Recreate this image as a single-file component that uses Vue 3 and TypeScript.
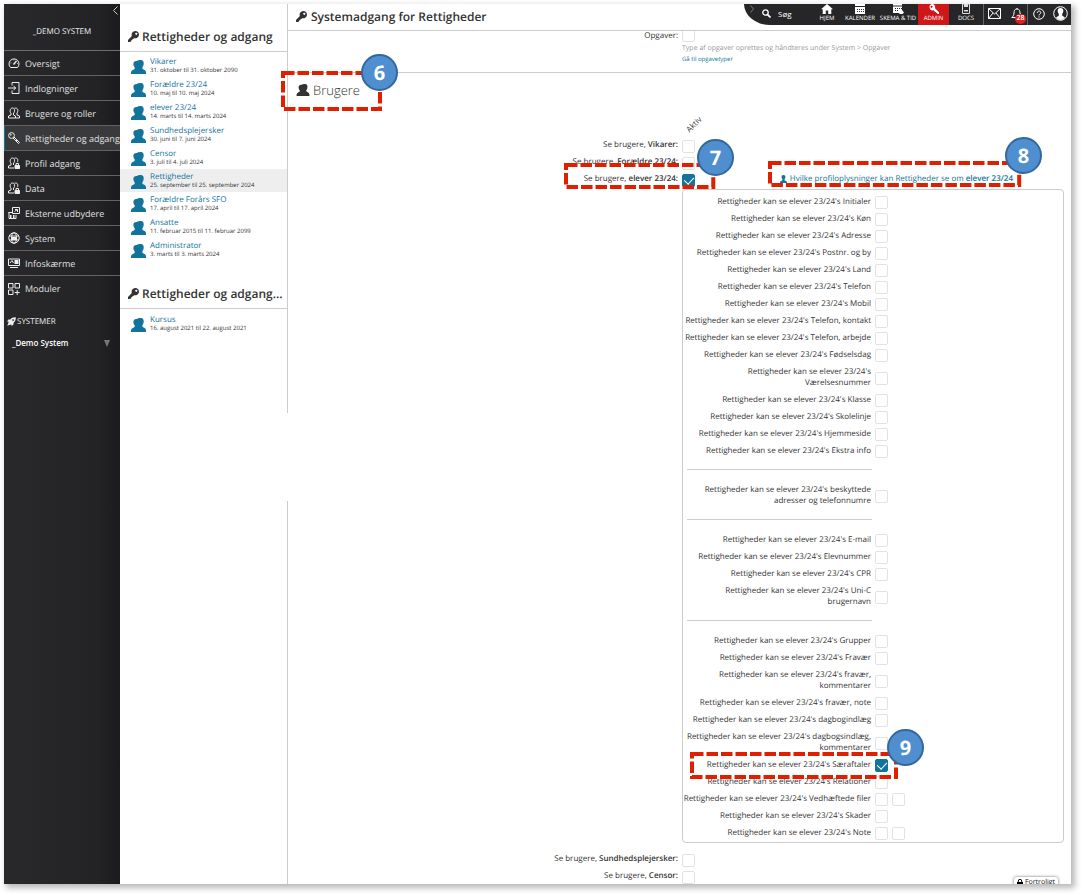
<script setup lang="ts">
import { ref } from 'vue'

interface NavItem { label: string; icon: string; active?: boolean }
interface RoleItem { name: string; period: string; selected?: boolean }
interface Permission { id: string; label: string; checked?: boolean; extra?: boolean; marked?: boolean }

const navItems: NavItem[] = [
  { label: 'Oversigt', icon: 'gauge' },
  { label: 'Indlogninger', icon: 'login' },
  { label: 'Brugere og roller', icon: 'users' },
  { label: 'Rettigheder og adgang', icon: 'key', active: true },
  { label: 'Profil adgang', icon: 'userlock' },
  { label: 'Data', icon: 'userlock' },
  { label: 'Eksterne udbydere', icon: 'external' },
  { label: 'System', icon: 'globe' },
  { label: 'Infoskærme', icon: 'screen' },
  { label: 'Moduler', icon: 'modules' },
]

const roles: RoleItem[] = [
  { name: 'Vikarer', period: '31. oktober til 31. oktober 2090' },
  { name: 'Forældre 23/24', period: '10. maj til 10. maj 2024' },
  { name: 'elever 23/24', period: '14. marts til 14. marts 2024' },
  { name: 'Sundhedsplejersker', period: '30. juni til 7. juni 2024' },
  { name: 'Censor', period: '3. juli til 4. juli 2024' },
  { name: 'Rettigheder', period: '25. september til 25. september 2024', selected: true },
  { name: 'Forældre Forårs SFO', period: '17. april til 17. april 2024' },
  { name: 'Ansatte', period: '11. februar 2015 til 11. februar 2099' },
  { name: 'Administrator', period: '3. marts til 3. marts 2024' },
]
const expiredRoles: RoleItem[] = [
  { name: 'Kursus', period: '16. august 2021 til 22. august 2021' },
]

const prefix = "Rettigheder kan se elever 23/24's"
// A leading newline puts a long permission name on its own line.
const make = (entries: string[]): Permission[] =>
  entries.map((label) => ({ id: 'p-' + label.toLowerCase().replace(/[^a-zæøå]+/g, '-'), label }))

const groups = ref<Permission[][]>([
  make([' Initialer', ' Køn', ' Adresse', ' Postnr. og by', ' Land', ' Telefon', ' Mobil', ' Telefon, kontakt',
    ' Telefon, arbejde', ' Fødselsdag', '\nVærelsesnummer', ' Klasse', ' Skolelinje', ' Hjemmeside', ' Ekstra info']),
  make([' beskyttede\nadresser og telefonnumre']),
  make([' E-mail', ' Elevnummer', ' CPR', ' Uni-C\nbrugernavn']),
  make([' Grupper', ' Fravær', ' fravær,\nkommentarer', ' fravær, note', ' dagbogindlæg',
    ' dagbogsindlæg,\nkommentarer', ' Særaftaler', ' Relationer', ' Vedhæftede filer', ' Skader', ' Note']).map((p) => ({
    ...p,
    checked: p.label === ' Særaftaler',
    marked: p.label === ' Særaftaler',
    extra: p.label === ' Vedhæftede filer' || p.label === ' Note',
  })),
])

const opgaver = ref(false)
const seeVikarer = ref(false)
const seeForaeldre = ref(false)
const seeElever = ref(true)
const seeSundhed = ref(false)
const seeCensor = ref(false)
const system = ref('_Demo System')
const query = ref('')
</script>

<template>
  <div class="frame">
    <svg class="defs" aria-hidden="true">
      <symbol id="people" viewBox="0 0 15 14">
        <path d="M9 0c2.700-.2 3.900 1.300 3.700 3.800-.1 1.500-.6 2.600-1.300 3.400v1.300c.4 1 3.200 1.200 3.600 3.500v2H0v-1.800c.4-2.300 3-2.500 3.700-3.500V7.500C2.900 6.700 2.500 5.800 2.400 4.600 2.200 2.300 3.400.8 5.800 1 6.600.3 7.700 0 9 0z" />
      </symbol>
      <symbol id="person" viewBox="0 0 12 14">
        <path d="M6 0c2.600 0 3.600 1.600 3.400 3.800-.1 1.400-.7 2.400-1.500 3.200v2c.4 1 3.600 1 4.100 3.200V14H0v-1.800c.5-2.200 3.700-2.200 4.100-3.200V7C3.300 6.200 2.700 5.200 2.600 3.800 2.400 1.600 3.400 0 6 0z" />
      </symbol>
      <symbol id="solidkey" viewBox="0 0 12 12">
        <path fill-rule="evenodd" d="M8 0a4 4 0 1 1-1.300 7.800l-1 .9-.9.200-.2 1-1 .3-.2 1L2.300 12H0V9.900l4.200-4.500A4 4 0 0 1 8 0zm1 2a1.100 1.100 0 1 0 .1 0z" />
      </symbol>
    </svg>

    <aside class="sidebar">
      <div class="brand">
        <button class="collapse" type="button" aria-label="Skjul menu">
          <svg width="5" height="9" viewBox="0 0 5 9"><path d="M4.500.5l-4 4 4 4" fill="none" stroke="#ccc" /></svg>
        </button>
        _DEMO SYSTEM
      </div>
      <nav>
        <a v-for="item in navItems" :key="item.label" href="#" class="nav-item" :class="{ active: item.active }">
          <svg class="nav-icon" viewBox="0 0 12 12" fill="none" stroke="#eee">
            <template v-if="item.icon === 'gauge'">
              <path d="M2.500 10.500a5 5 0 1 1 7 0z" /><path d="M5.500 7.500L8.500 4" stroke-width="1.400" /><path d="M2.500 6h1M6 2.500v1M9 6.500h1" stroke-width=".7" />
            </template>
            <template v-else-if="item.icon === 'login'">
              <path d="M4 3.500V.5h7v11H4v-3" /><path d="M0 6h7.500M5.500 3.800L7.700 6 5.500 8.200" />
            </template>
            <template v-else-if="item.icon === 'users'">
              <path d="M4.500 1c2.600 0 2.600 4 1 5v2l2 1v2H.5V9l2.500-1V6C1.400 5 1.900 1 4.500 1z" /><path d="M6.500 1.200c4-.9 3.800 3.300 2.500 4.800v2l2.500 1v2H7.500" />
            </template>
            <template v-else-if="item.icon === 'key'">
              <circle cx="3.500" cy="3.500" r="2.900" /><path d="M5 6l5.500 5.500 1-1L6 5M8 9l1-1" /><circle cx="2.800" cy="2.800" r=".5" />
            </template>
            <template v-else-if="item.icon === 'userlock'">
              <path d="M4.500 1c2.600 0 2.600 4 1 5v2M.5 11V9L3 8V6C1.400 5 1.900 1 4.500 1M.5 11H6" /><path d="M6.500 1.200c3.600-.9 3.800 2.300 2.800 4" />
              <path d="M7 8.500h4.500v3H7z" fill="#eee" /><path d="M8 8.500V6.500h2.500v2" />
            </template>
            <template v-else-if="item.icon === 'external'">
              <path d="M4.500.5h7v6h-7z" /><path d="M1 5v6.500h7V8M.5 5.500h4M6.500 4.500l3-2M7 2.500h2.500V5" /><path d="M2 8h1.500v3H2zM5 8h1.500v3H5z" fill="#eee" stroke="none" />
            </template>
            <template v-else-if="item.icon === 'globe'">
              <circle cx="6" cy="6" r="5.200" /><ellipse cx="6" cy="6" rx="2.400" ry="5.200" /><path d="M1 4h10M1 8h10" /><path d="M3 5h6v3H3z" fill="#eee" stroke="none" />
            </template>
            <template v-else-if="item.icon === 'screen'">
              <path d="M.5 2h11v6.500H.5z" /><path d="M2 10.500h8M2 6l2-2.500L5.500 6" /><path d="M6.500 3h4v4h-4z" fill="#eee" stroke="none" />
            </template>
            <template v-else>
              <path d="M.5.500h4.500v4.500H.5zM7 .5h4.500v4.500H7zM.5 7h4.500v4.500H.5zM9.200 7v5M6.700 9.500h5" />
            </template>
          </svg>
          <span>{{ item.label }}</span>
        </a>
      </nav>
      <h2 class="systems-title">
        <svg width="9" height="9" viewBox="0 0 9 9" fill="#eee"><path fill-rule="evenodd" d="M8.800.2C6 .1 4.500 1 3.200 2.400L1.400 2.500.1 4.400l1.600.3-.5 1.500L.3 8.700l2.600-.9 1.400-.4.3 1.500 1.900-1.300.1-1.900C8 4.500 8.900 3 8.800.2zM6 2.200a.8.8 0 1 0 .1 0z" /></svg>
        SYSTEMER
      </h2>
      <div class="system-pick">
        <select v-model="system" aria-label="System"><option>_Demo System</option></select>
        <svg width="8" height="7" viewBox="0 0 8 7"><path d="M1 0h6L4 7z" fill="#77777a" /></svg>
      </div>
    </aside>

    <section class="roles">
      <div class="roles-top">
        <h2 class="roles-title"><svg class="title-key"><use href="#solidkey" /></svg><span>Rettigheder og adgang</span></h2>
        <ul>
          <li v-for="role in roles" :key="role.name" :class="{ selected: role.selected }">
            <svg class="role-icon"><use href="#people" /></svg>
            <div><a href="#">{{ role.name }}</a><small>{{ role.period }}</small></div>
          </li>
        </ul>
        <h2 class="roles-title second"><svg class="title-key"><use href="#solidkey" /></svg><span>Rettigheder og adgang...</span></h2>
        <ul>
          <li v-for="role in expiredRoles" :key="role.name">
            <svg class="role-icon"><use href="#people" /></svg>
            <div><a href="#">{{ role.name }}</a><small>{{ role.period }}</small></div>
          </li>
        </ul>
      </div>
      <div class="roles-rest"></div>
    </section>

    <main class="main">
      <header class="header">
        <h1><svg class="title-key"><use href="#solidkey" /></svg>Systemadgang for Rettigheder</h1>
        <div class="topbar">
          <svg class="chev" width="4" height="8" viewBox="0 0 4 8"><path d="M.5.5L3.500 4l-3 3.500" fill="none" stroke="#777" /></svg>
          <label class="search">
            <svg width="9" height="9" viewBox="0 0 9 9" fill="none" stroke="#fff"><circle cx="3.500" cy="3.500" r="2.700" stroke-width="1.300" /><path d="M5.600 5.600L8.500 8.500" stroke-width="1.700" /></svg>
            <input v-model="query" type="text" placeholder="Søg" aria-label="Søg">
          </label>
          <a href="#" class="tab home"><svg viewBox="0 0 12 10"><path d="M6 0l6 5.300h-1.700V10H7.200V6.500H4.800V10H1.700V5.300H0z" fill="#fff" /></svg>HJEM</a>
          <a href="#" class="tab cal"><svg viewBox="0 0 12 10"><path d="M1 0h10v2H1zM1 3h10v7H1z" fill="#fff" /><path d="M3 5.500h7M3 7.500h7" stroke="#262628" stroke-dasharray="1 1" /></svg>KALENDER</a>
          <a href="#" class="tab schema"><svg viewBox="0 0 12 10"><path d="M1 0h9v1.500H1zM1 2.500h9V6l2 2.500-1.500 1.500H8L6.500 9H1z" fill="#fff" /><path d="M3 4.500h7M3 6.500h4" stroke="#262628" stroke-dasharray="1 1" /></svg>SKEMA &amp; TID</a>
          <a href="#" class="tab admin"><svg viewBox="0 0 12 10"><path fill-rule="evenodd" d="M4 0a3.200 3.200 0 0 1 3 4.300l4 4V10H9.300V9H8.200V8H7.100L5.600 6.300A3.200 3.200 0 1 1 4 0zM3.500 1.700a1 1 0 1 0 .1 0z" fill="#fff" /></svg>ADMIN</a>
          <a href="#" class="tab docs"><svg viewBox="0 0 12 10"><path d="M2.500 0h7v9.500h-7z" fill="none" stroke="#ddd" /><path d="M4 0h4v3H4zM4 6h4v1.500H4z" fill="#ddd" /></svg>DOCS</a>
          <a href="#" class="tool" aria-label="Beskeder"><svg width="13" height="11" viewBox="0 0 13 11" fill="none" stroke="#fff"><path d="M.5.500h12v10H.5zM.5.500l6 5.500 6-5.500M.5 10.500L5 5M12.500 10.500L8 5" /></svg></a>
          <a href="#" class="tool bell" aria-label="Notifikationer"><svg width="12" height="12" viewBox="0 0 12 12" fill="none" stroke="#fff"><path d="M6 1C3.500 1 3 3 3 5S2 8.500.8 9.500h10.400C10 8.500 9 7 9 5S8.500 1 6 1zM4.500 10c.3 1.500 2.700 1.500 3 0M6 0v1" /></svg><b>28</b></a>
          <a href="#" class="tool" aria-label="Hjælp"><svg width="12" height="12" viewBox="0 0 12 12" fill="none" stroke="#fff"><circle cx="6" cy="6" r="5.300" /><path d="M4.300 4.800c0-2.400 3.500-2.200 3.500-.2C7.800 6 6 5.800 6 7.400M6 8.300v1.200" /></svg></a>
          <a href="#" class="tool last" aria-label="Profil"><svg width="15" height="15" viewBox="0 0 15 15"><circle cx="7.500" cy="7.500" r="6.800" fill="#262628" stroke="#fff" /><path d="M7.500 2c2.300 0 3 1.400 2.800 3.200-.1 1.200-.6 2-1.100 2.500v1.900c.5.900 2.100 1.100 2.700 2-2 3.200-6.800 3.200-8.800 0 .6-.9 2.200-1.100 2.700-2V7.700c-.5-.5-1-1.300-1.100-2.500C4.500 3.400 5.200 2 7.500 2z" fill="#fff" /></svg></a>
        </div>
      </header>

      <div class="content">
        <div class="row first">
          <label class="name" for="opgaver">Opgaver:</label>
          <div class="value"><input id="opgaver" v-model="opgaver" type="checkbox"></div>
        </div>
        <div class="hint">
          <p>Type af opgaver oprettes og håndteres under System &gt; Opgaver</p>
          <a href="#">Gå til opgavetyper</a>
        </div>

        <div class="section">
          <h2>
            <svg class="section-icon"><use href="#people" /></svg>Brugere
            <span class="callout six"><svg class="dash"><rect width="100%" height="100%" /></svg><b class="dot">6</b></span>
          </h2>
        </div>

        <div class="column-head"><span>Aktiv</span></div>

        <div class="row">
          <label class="name" for="vikarer">Se brugere, <strong>Vikarer:</strong></label>
          <div class="value"><input id="vikarer" v-model="seeVikarer" type="checkbox"></div>
        </div>
        <div class="row">
          <label class="name" for="foraeldre">Se brugere, <strong>Forældre 23/24:</strong></label>
          <div class="value"><input id="foraeldre" v-model="seeForaeldre" type="checkbox"></div>
        </div>
        <div class="row">
          <div class="name">
            <span class="anchor">
              <label for="elever">Se brugere, <strong>elever 23/24:</strong></label>
              <span class="callout seven"><svg class="dash"><rect width="100%" height="100%" /></svg><b class="dot">7</b></span>
            </span>
          </div>
          <div class="value">
            <input id="elever" v-model="seeElever" type="checkbox">
            <div class="anchor profile">
              <a href="#"><svg class="person-icon"><use href="#person" /></svg><span>Hvilke profiloplysninger kan Rettigheder se om <strong>elever 23/24</strong></span></a>
              <span class="callout eight"><svg class="dash"><rect width="100%" height="100%" /></svg><b class="dot">8</b></span>
            </div>
          </div>
        </div>

        <div class="panel-row">
          <div class="panel">
            <div v-for="(group, g) in groups" :key="g" class="group">
              <div v-for="perm in group" :key="perm.id" class="perm">
                <label :for="perm.id">{{ prefix + perm.label }}</label>
                <div class="boxes">
                  <input :id="perm.id" v-model="perm.checked" type="checkbox">
                  <input v-if="perm.extra" type="checkbox" :aria-label="prefix + perm.label">
                </div>
                <span v-if="perm.marked" class="callout nine"><svg class="dash"><rect width="100%" height="100%" /></svg><b class="dot">9</b></span>
              </div>
            </div>
          </div>
        </div>

        <div class="row">
          <label class="name" for="sundhed">Se brugere, <strong>Sundhedsplejersker:</strong></label>
          <div class="value"><input id="sundhed" v-model="seeSundhed" type="checkbox"></div>
        </div>
        <div class="row">
          <label class="name" for="censor">Se brugere, <strong>Censor:</strong></label>
          <div class="value"><input id="censor" v-model="seeCensor" type="checkbox"></div>
        </div>
      </div>
    </main>

    <div class="confidential">
      <svg width="6" height="7" viewBox="0 0 6 7"><path d="M0 3h6v4H0z" /><path d="M1.300 3V2a1.700 1.700 0 0 1 3.400 0v1" fill="none" stroke="#111" /></svg>
      Fortroligt
    </div>
  </div>
</template>

<style>
body { background: #fff; }
</style>

<style scoped>
.frame, .frame * { box-sizing: border-box; }
.frame {
  position: relative;
  display: flex;
  margin: 4px 12px 11px 4px;
  background: #fff;
  box-shadow: 3px 3px 6px 1px rgba(0, 0, 0, .28);
  overflow: hidden;
  font: 8px/11px "Open Sans", sans-serif;
  text-rendering: geometricPrecision;
  color: #333;
}
h1, h2, ul, p { margin: 0; padding: 0; font-weight: 400; }
ul { list-style: none; }
a { color: #12749b; text-decoration: none; }
svg { flex: none; }
.defs { position: absolute; width: 0; height: 0; }

.sidebar { width: 116px; flex: none; background: linear-gradient(90deg, #29292b, #232325 80%, #1b1b1d); color: #eee; }
.brand { position: relative; height: 47px; display: flex; align-items: center; justify-content: center; padding-top: 8px; border-bottom: 1px solid #6d6d6f; }
.collapse { position: absolute; top: 2px; right: 2px; padding: 0; border: 0; background: none; line-height: 0; }
.nav-item { display: flex; align-items: center; gap: 5px; height: 25px; padding-left: 4px; border-bottom: 1px solid #626264; color: #e0e0e0; font-size: 9px; white-space: nowrap; }
.nav-item:last-child { border-bottom: 0; }
.nav-item.active { background: #3a3a3d; padding-left: 3px; border-left: 1px solid #12749b; }
.nav-icon { width: 12px; height: 12px; }
.systems-title { display: flex; align-items: center; gap: 1px; margin-top: 15px; padding-left: 3px; font-size: 8px; }
.system-pick { display: flex; align-items: center; justify-content: space-between; margin-top: 10px; padding: 0 9px 0 8px; }
.system-pick select { appearance: none; border: 0; padding: 0; background: none; color: #fff; font: 600 8px/12px "Open Sans", sans-serif; }

.roles { width: 168px; flex: none; display: flex; flex-direction: column; }
.roles-top { height: 409px; border-right: 1px solid #ccc; }
.roles-rest { flex: 1; margin-top: 88px; border-right: 1px solid #ccc; }
.roles-title { display: flex; align-items: center; gap: 3px; height: 48px; padding: 17px 0 0 8px; border-bottom: 1px solid #ccc; font-size: 12px; font-weight: 600; white-space: nowrap; }
.roles-title.second { height: 32px; margin-top: 16px; padding-top: 2px; }
.title-key { width: 11px; height: 11px; fill: #333; }
.roles li { display: flex; align-items: center; gap: 4px; height: 23px; padding-left: 11px; }
.roles ul { padding-top: 2px; }
.roles .second + ul { padding-top: 3px; }
.roles li.selected { background: #eee; }
.role-icon { width: 15px; height: 14px; margin-top: 3px; fill: #12749b; }
.roles li a { display: block; font-size: 8px; line-height: 9px; }
.roles li small { display: block; font-size: 6px; line-height: 8px; }

.main { flex: 1; min-width: 0; }
.header { position: relative; z-index: 3; display: flex; justify-content: space-between; height: 27px; border-bottom: 1px solid #ccc; background: #fff; }
.header h1 { display: flex; align-items: center; gap: 4px; padding: 0 0 2px 8px; font-size: 12px; font-weight: 600; }
.topbar { display: flex; align-items: stretch; height: 21px; background: #262628; border-bottom-left-radius: 26px 21px; color: #fff; }
.chev { margin: 1px 8px 0 6px; }
.search { display: flex; align-items: center; gap: 7px; width: 50px; padding-bottom: 2px; }
.search input { width: 28px; padding: 0; border: 0; outline: 0; background: none; color: #fff; font: 8px/11px "Open Sans", sans-serif; }
.search input::placeholder { color: #fff; opacity: 1; }
.tab { display: flex; flex-direction: column; align-items: center; color: #fff; font-size: 6px; line-height: 8px; white-space: nowrap; }
.tab svg { width: 12px; height: 10px; }
.home { width: 30px; }
.cal { width: 36px; }
.schema { width: 40px; }
.admin { width: 31px; background: #ce1719; }
.docs { width: 34px; }
.tool { position: relative; display: flex; align-items: center; justify-content: center; width: 22px; padding-bottom: 2px; border-left: 1px solid #666; }
.tool.bell, .tool.last { border-left-color: transparent; }
.bell b { position: absolute; left: 9px; top: 10px; width: 11px; height: 10px; border-radius: 5px; background: #e02020; color: #fff; font-size: 7px; font-weight: 600; line-height: 10px; text-align: center; }

.content { padding-left: 1px; }
.row { display: grid; grid-template-columns: 1fr 1fr; gap: 4px; height: 17px; }
.row.first { height: 15px; margin-top: -4px; }
.name { text-align: right; padding-top: 3px; white-space: nowrap; }
.value { display: flex; align-items: flex-start; padding-top: 4px; }
.first .value { padding-top: 2px; }
strong { font-weight: 600; }
input[type="checkbox"] { appearance: none; position: relative; flex: none; width: 13px; height: 13px; margin: 0; border: 1px solid #e2e2e2; border-radius: 2px; background: #fff; }
input[type="checkbox"]:checked { background: #12749b; border-color: #12749b; }
input[type="checkbox"]:checked::after { content: ""; position: absolute; left: 3px; top: 0; width: 5px; height: 8px; border: solid #fff; border-width: 0 1px 1px 0; transform: rotate(42deg); }
.hint { margin-left: calc(50% + 2px); padding-top: 1px; }
.hint p { color: #999; font-size: 7px; }
.hint a { display: block; font-size: 6px; line-height: 10px; }
.section { margin: 8px 0 0 -1px; padding: 8px 0 0 8px; border-top: 1px solid #ccc; }
.section h2 { position: relative; display: inline-flex; align-items: center; gap: 3px; height: 18px; font-size: 13px; font-weight: 300; }
.section-icon { width: 14px; height: 12px; fill: #333; }
.column-head { height: 37px; margin-left: calc(50% + 2px); padding: 20px 0 0 3px; }
.column-head span { display: inline-block; transform: rotate(-45deg); }
.anchor { position: relative; }
.profile { margin: -3px 58px 0 auto; padding-top: 2px; white-space: nowrap; }
.profile a { display: flex; align-items: center; gap: 3px; }
.person-icon { width: 7px; height: 8px; fill: #12749b; }

.panel-row { margin: 2px 7px 7px calc(50% + 2px); }
.panel { padding: 3px 4px 1px; border: 1px solid #ccc; border-radius: 4px; }
.group + .group::before { content: ""; display: block; width: calc(50% - 1px); margin: 10px 0 11px; border-top: 1px solid #ccc; }
.perm { position: relative; display: grid; grid-template-columns: minmax(0, 1fr) minmax(0, 1fr); gap: 4px; align-items: center; padding: 3px 0; }
.perm label { justify-self: end; text-align: right; white-space: pre; }
.boxes { display: flex; gap: 4px; margin: -3px 0; padding-top: 2px; }

.callout { position: absolute; pointer-events: none; z-index: 2; }
.dash { position: absolute; inset: 2px; width: calc(100% - 4px); height: calc(100% - 4px); overflow: visible; }
.dash rect { fill: none; stroke: #e01e00; stroke-width: 4px; stroke-dasharray: 11.500 3; }
.dot { position: absolute; width: 37px; height: 37px; border: 2px solid #34689c; border-radius: 50%; background: #4f8fcf; color: #fff; font: 700 20px/33px "Open Sans", sans-serif; text-align: center; }
.six { left: -15px; right: -22px; top: -10px; height: 40px; }
.six .dot { right: -16px; top: -17px; }
.seven { left: -20px; right: -37px; top: -10px; height: 26px; }
.seven .dot { right: -19px; top: -24px; }
.eight { left: -12px; right: -8px; top: -10px; height: 26px; }
.eight .dot { right: -21px; top: -24px; }
.nine { left: 3px; width: 208px; top: -4px; height: 27px; }
.nine .dot { right: -26px; top: -23px; }

.confidential { position: absolute; right: 13px; bottom: -4px; display: flex; align-items: center; gap: 2px; padding: 0 3px; border-radius: 3px; background: #fff; box-shadow: 0 0 3px rgba(0, 0, 0, .6); color: #111; font-size: 7px; }
</style>
